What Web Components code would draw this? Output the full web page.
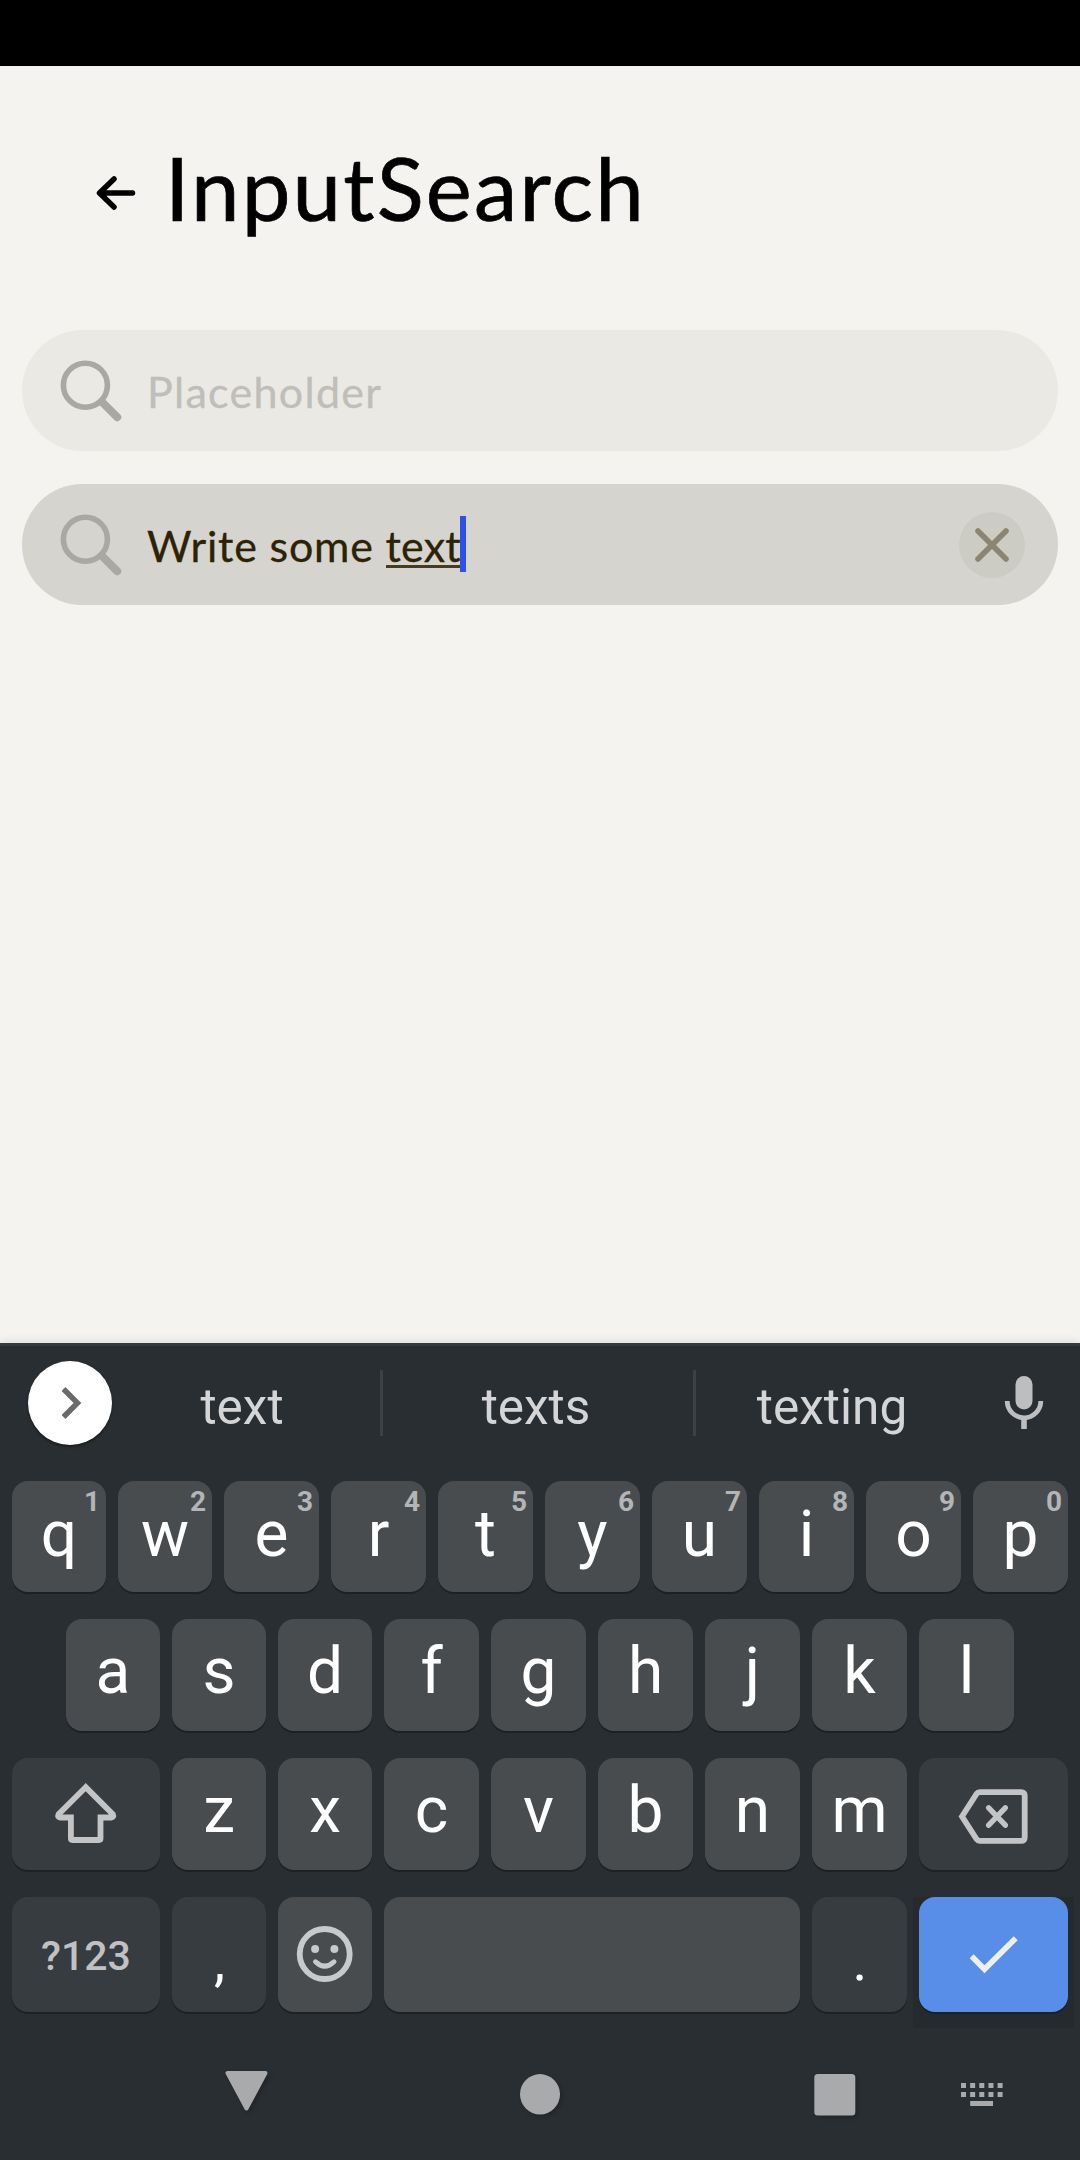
<!DOCTYPE html>
<html lang="en">
<head>
<meta charset="utf-8">
<title>InputSearch</title>
<style>
html, body { margin: 0; width: 1080px; height: 2160px; overflow: hidden; background: #f4f3ef; }
</style>
</head>
<body>
<search-screen></search-screen>
<script>
const define = (name, html, setup) => {
  const tpl = document.createElement('template');
  tpl.innerHTML = html.trim();
  customElements.define(name, class extends HTMLElement {
    connectedCallback() {
      if (this.shadowRoot) return;
      this.attachShadow({ mode: 'open' }).append(tpl.content.cloneNode(true));
      if (setup) setup(this, this.shadowRoot);
    }
  });
};

const icons = {
  back: [40, 36, '<path d="M36.500 18H4M18 4L3.500 18L18 32" fill="none" stroke="#000" stroke-width="5.500" stroke-linecap="round" stroke-linejoin="round"/>'],
  search: [62, 62, '<g fill="none" stroke="#aaa8a2"><circle cx="25.400" cy="25.200" r="22" stroke-width="5.600"/><path d="M43 43L57.200 57.200" stroke-width="8" stroke-linecap="round"/></g>'],
  clear: [66, 66, '<circle cx="33" cy="33" r="33" fill="#cccbc4"/><path d="M19 19L47 47M47 19L19 47" stroke="#8b8674" stroke-width="5.600" stroke-linecap="round"/>'],
  expand: [84, 84, '<path d="M35.500 28L49.500 42L35.500 56" fill="none" stroke="#6a6a6a" stroke-width="5.400"/>'],
  mic: [40, 54, '<g fill="#bdbec0"><rect x="11.500" y="0" width="17" height="33.500" rx="8.500"/><rect x="17.200" y="42" width="5.600" height="11"/></g><path d="M3.200 25a16.800 16.800 0 0 0 33.600 0" fill="none" stroke="#bdbec0" stroke-width="4.800"/>'],
  shift: [148, 112, '<path d="M73.700 29.200L46.600 56.300q-1.400 2.900 1.500 3.200H58.900V80.500q0 1.500 1.500 1.500H87q1.500 0 1.500-1.500V59.500H99.300q2.900-.3 1.500-3.200Z" fill="none" stroke="#c3c4c6" stroke-width="5.800"/>'],
  backspace: [148, 112, '<g fill="none" stroke="#c3c4c6"><path d="M43 58.500L57.600 35.800Q58.800 34.200 60.800 34.200H102Q105.700 34.200 105.700 37.900V79.200Q105.700 82.900 102 82.900H60.800Q58.800 82.900 57.600 81.200Z" stroke-width="5.800"/><path d="M69.700 49.800L86.300 67.200M86.300 49.800L69.700 67.200" stroke-width="5.400" stroke-linecap="round"/></g>'],
  emoji: [94, 115, '<g fill="none" stroke="#c8c9cb"><circle cx="46.700" cy="57" r="25" stroke-width="5.800"/><path d="M37.500 64.800Q46.700 73.600 56 64.800" stroke-width="5" stroke-linecap="round"/></g><g fill="#c8c9cb"><circle cx="37.100" cy="52" r="4"/><circle cx="56.400" cy="52" r="4"/></g>'],
  check: [148, 115, '<path d="M52.600 59.300L65.500 72.300L96.700 41.300" fill="none" stroke="#efefef" stroke-width="5.600"/>'],
  down: [46, 42, '<path d="M3.500 2H41.500L22.500 37.500Z" fill="#a9aaac" stroke="#a9aaac" stroke-width="4" stroke-linejoin="round"/>'],
  home: [40, 41, '<ellipse cx="20" cy="20.300" rx="20" ry="20.200" fill="#a9aaac"/>'],
  recents: [42, 42, '<rect x=".3" y="0" width="41" height="41.500" rx="3.500" fill="#a9aaac"/>'],
  ime: [42, 24, '<path d="M0 2.500H42M0 11.500H42" stroke="#a9aaac" stroke-width="5" stroke-dasharray="5 4.150"/><path d="M9.200 20.500H32" stroke="#a9aaac" stroke-width="5"/>']
};

define('ui-icon', `<style>:host{display:block;flex:none;line-height:0}svg{display:block}</style>`, (el, root) => {
  const [w, h, body] = icons[el.getAttribute('name')];
  root.innerHTML += `<svg width="${w}" height="${h}" viewBox="0 0 ${w} ${h}">${body}</svg>`;
});

define('page-header', `
<style>
:host{display:flex;height:240px;padding:24px 0 0 96px;box-sizing:border-box;align-items:flex-start}
ui-icon{margin-top:85px}
h1{margin:38px 0 0 29px;font:400 87px/120px Lato,sans-serif;letter-spacing:2.2px;color:#000;-webkit-text-stroke:.7px #000}
</style>
<ui-icon name="back"></ui-icon><h1><slot></slot></h1>`);

define('input-search', `
<style>
:host{display:flex;align-items:center;height:121px;box-sizing:border-box;border-radius:61px;padding:0 33px 0 38px;background:#eae9e4;color:#bfbeb9;font:400 43px/56px Lato,sans-serif}
:host([filled]){background:#d5d4cf;color:#2c2304}
.field{display:flex;align-items:center;flex:1;margin-left:25px;padding-top:2px;white-space:pre;-webkit-text-stroke:.3px currentColor;letter-spacing:1.3px}
:host([filled]) .field{letter-spacing:.8px}
</style>
<ui-icon name="search"></ui-icon><div class="field"><slot></slot></div><slot name="action"></slot>`);

define('composing-text', `<style>:host{display:block;height:56px;line-height:56px;letter-spacing:.2px;background:linear-gradient(#453d22,#453d22) 0 47px/100% 3px no-repeat}</style><slot></slot>`);
define('text-caret', `<style>:host{display:block;width:6px;height:56px;background:#2c51e8;margin:-3px 0 0 -1px}</style>`);

define('suggestion-cell', `
<style>
:host{display:flex;align-items:center;justify-content:center;box-sizing:border-box;height:66px;font:400 49.500px/66px Roboto,sans-serif;color:#d4d5d6;border-right:3px solid #3d4145}
:host([last]){border-right-color:transparent}
span{padding-top:8px}
</style><span><slot></slot></span>`);

define('suggestion-strip', `
<style>
:host{display:flex;align-items:center;height:114px;padding-left:28px}
.round{width:84px;height:84px;border-radius:50%;background:#fff;box-shadow:0 2px 3px #0006}
.a{width:271px;padding-right:8px}.b{width:313px;padding-right:4px}.c{width:277px;padding-right:2px}
ui-icon[name=mic]{margin:0 0 0 31px}
</style>
<div class="round"><ui-icon name="expand"></ui-icon></div>
<suggestion-cell class="a">text</suggestion-cell><suggestion-cell class="b">texts</suggestion-cell><suggestion-cell class="c" last>texting</suggestion-cell>
<ui-icon name="mic"></ui-icon>`);

define('key-cap', `
<style>
:host{display:block;position:relative;flex:1 1 0;min-width:0;height:100%;border-radius:16px;background:#484c4e;box-shadow:0 2px 0 #1d2124;color:#fff;text-align:center;font:400 64px/106px Roboto,sans-serif}
:host([hint]){line-height:107px}
:host([wide]){flex:0 0 148px}
:host([small]){flex:0 0 94px}
:host([dim]){background:#373c40}
:host([punct]){font-size:56px;line-height:129px;text-indent:1px}
:host([label]){font-weight:500;font-size:41px;line-height:118px;color:#c0c1c3}
:host([enter]){flex:0 0 149px;background:#588ee8}
:host([enter])::before{content:"";position:absolute;z-index:-1;inset:0 -6px -16px -6px;background:#262a2d;border-radius:2px}
.hint{position:absolute;top:0;right:6px;font:700 28px/41px Roboto,sans-serif;color:#b3b5b6}
</style><slot></slot>`, (el, root) => {
  const hint = el.getAttribute('hint');
  if (hint) { const s = document.createElement('span'); s.className = 'hint'; s.textContent = hint; root.append(s); }
});

define('key-row', `<style>:host{display:flex;gap:12px;height:112px;padding:0 12px}</style><slot></slot>`);

const keys = (s, small) => [...s].map((c, i) => `<key-cap${i < small ? ' small' : ''}>${c}</key-cap>`).join('');
const hinted = [...'qwertyuiop'].map((c, i) => `<key-cap${i < 2 ? ' small' : ''} hint="${(i + 1) % 10}">${c}</key-cap>`).join('');

define('soft-keyboard', `
<style>
:host{display:block;position:relative;z-index:0;height:817px;box-sizing:border-box;border-top:3px solid #343b3f;background:#292e32;box-shadow:0 0 10px #0000001c}
suggestion-strip{margin-bottom:21px}
.r1{height:111px;margin-bottom:27px}.r2{padding:0 66px;margin-bottom:27px}.r3{margin-bottom:27px}.r4{height:115px}
.del{flex-basis:149px}
</style>
<suggestion-strip></suggestion-strip>
<key-row class="r1">${hinted}</key-row>
<key-row class="r2">${keys('asdfghjkl', 3)}</key-row>
<key-row class="r3"><key-cap wide dim><ui-icon name="shift"></ui-icon></key-cap>${keys('zxcvbnm', 2)}<key-cap class="del" wide dim><ui-icon name="backspace"></ui-icon></key-cap></key-row>
<key-row class="r4"><key-cap wide dim label>?123</key-cap><key-cap small dim punct>,</key-cap><key-cap small><ui-icon name="emoji"></ui-icon></key-cap><key-cap></key-cap><key-cap style="flex-basis:95px" small dim punct>.</key-cap><key-cap wide enter><ui-icon name="check"></ui-icon></key-cap></key-row>
<system-nav></system-nav>`);

define('system-nav', `
<style>
:host{display:flex;align-items:flex-start;padding:59px 0 0 224px}
ui-icon{filter:drop-shadow(2px 2px 2px #0003)}
ui-icon[name=home]{margin:3px 0 0 250px}
ui-icon[name=recents]{margin:3px 0 0 254px}
ui-icon[name=ime]{margin:12px 0 0 105px;filter:none}
</style>
<ui-icon name="down"></ui-icon><ui-icon name="home"></ui-icon><ui-icon name="recents"></ui-icon><ui-icon name="ime"></ui-icon>`);

define('search-screen', `
<style>
:host{display:flex;flex-direction:column;width:1080px;height:2160px;background:#f4f3ef}
.status{height:66px;background:#000}
main{flex:1;display:flex;flex-direction:column;gap:33px;padding:24px 22px 0}
</style>
<div class="status"></div>
<page-header>InputSearch</page-header>
<main>
<input-search>Placeholder</input-search>
<input-search filled>Write some <composing-text>text</composing-text><text-caret></text-caret><ui-icon slot="action" name="clear"></ui-icon></input-search>
</main>
<soft-keyboard></soft-keyboard>`);
</script>
</body>
</html>
